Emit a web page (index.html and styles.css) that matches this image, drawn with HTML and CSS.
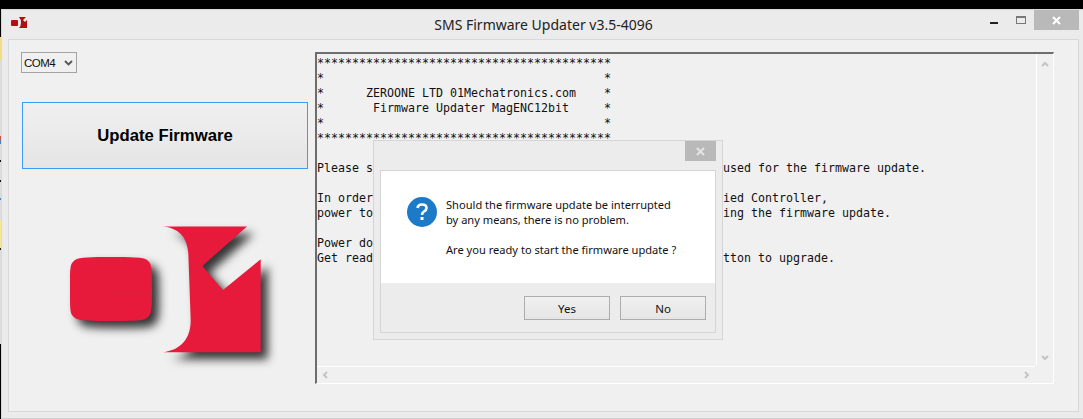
FILE: index.html
```html
<!DOCTYPE html>
<html lang="en">
<head>
  <meta charset="UTF-8">
  <title>SMS Firmware Updater</title>
  <link rel="stylesheet" href="styles.css">
</head>
<body>

  <div class="fenster">

    <div class="titelleiste">
      <svg class="app-icon" width="18" height="12" viewBox="0 0 18 12">
        <rect x="0" y="3" width="7" height="6" rx="1" fill="#b50d12"/>
        <path d="M8 0H15L12 3L14 5L16 3V11H8Q10 9 10 6Q10 2 8 0Z" fill="#b50d12"/>
      </svg>
      <div class="titel">SMS Firmware Updater v3.5-4096</div>
      <div class="fenster-knoepfe">
        <span class="knopf-min"></span>
        <span class="knopf-max"></span>
        <span class="knopf-close">
          <svg width="9" height="9" viewBox="0 0 9 9"><path d="M1 1L8 8M8 1L1 8" stroke="#fff" stroke-width="2"/></svg>
        </span>
      </div>
    </div>

    <div class="inhalt">

      <div class="links">
        <div class="com-select">
          <span>COM4</span>
          <svg width="9" height="6" viewBox="0 0 9 6"><path d="M1 1L4.5 4.5L8 1" fill="none" stroke="#555" stroke-width="1.8"/></svg>
        </div>
        <button class="update-btn">Update Firmware</button>
        <svg class="logo" width="200" height="140" viewBox="0 0 200 140">
          <path d="M10 63C10 40 10 38 15 34C19 31 32 31 51 31C70 31 84 31 87 34C92 38 92 42 92 63C92 84 92 88 87 92C84 95 70 95 51 95C32 95 19 95 15 92C10 88 10 86 10 63Z" fill="#e71a3b"/>
          <path d="M52 67H91" stroke="#d2243c" stroke-width="1"/>
          <path d="M102.700 0.500H187L142.300 40L163 64L200.700 33.300V126.300H102.700C116.700 124.500 130.700 117 130.700 94L128.300 27.300C127 10 118 2 102.700 0.500Z" fill="#e71a3b"/>
        </svg>
      </div>

      <div class="log-box">
        <pre class="log-text">******************************************
*                                        *
*      ZEROONE LTD 01Mechatronics.com    *
*       Firmware Updater MagENC12bit     *
*                                        *
******************************************

Please s                                                  used for the firmware update.

In order                                                 fied Controller,
power to                                                  ing the firmware update.

Power do
Get read                                                  tton to upgrade.</pre>
        <div class="scroll-v">
          <svg width="8" height="6" viewBox="0 0 8 6"><path d="M1 5L4 2L7 5" fill="none" stroke="#c4c4c4" stroke-width="2"/></svg>
          <svg width="8" height="6" viewBox="0 0 8 6"><path d="M1 1L4 4L7 1" fill="none" stroke="#c4c4c4" stroke-width="2"/></svg>
        </div>
        <div class="scroll-h">
          <svg width="6" height="8" viewBox="0 0 6 8"><path d="M5 1L2 4L5 7" fill="none" stroke="#c4c4c4" stroke-width="2"/></svg>
          <svg width="6" height="8" viewBox="0 0 6 8"><path d="M1 1L4 4L1 7" fill="none" stroke="#c4c4c4" stroke-width="2"/></svg>
        </div>
      </div>

    </div>
  </div>

  <!-- Dialog -->
  <div class="dialog">
    <div class="dialog-kopf">
      <span class="dialog-close">
        <svg width="9" height="9" viewBox="0 0 9 9"><path d="M1 1L8 8M8 1L1 8" stroke="#e4e4e4" stroke-width="2"/></svg>
      </span>
    </div>
    <div class="dialog-rahmen">
      <div class="dialog-text">
        <svg class="frage-icon" width="30" height="30" viewBox="0 0 30 30">
          <circle cx="15" cy="15" r="15" fill="#1b7bc9"/>
          <path d="M10.500 11Q11 7.500 15 7.500Q19.500 7.500 19.500 11Q19.500 13 17 14.500Q15 15.700 15 18" fill="none" stroke="#fff" stroke-width="2.600"/>
          <rect x="13.500" y="20" width="3" height="3" fill="#fff"/>
        </svg>
        <p>Should the firmware update be interrupted<br>by any means, there is no problem.<br><br>Are you ready to start the firmware update ?</p>
      </div>
      <div class="dialog-fuss">
        <button class="dialog-btn">Yes</button>
        <button class="dialog-btn">No</button>
      </div>
    </div>
  </div>

</body>
</html>
```
FILE: styles.css
```css
html, body {
  margin: 0;
  height: 419px;
  overflow: hidden;
}

/* schmaler Streifen links: Desktop hinter dem Fenster */
body {
  background: linear-gradient(#000 37px, #f5dc80 37px, #f5dc80 60px, #ddd 60px, #ddd 136px, #e8502a 136px, #2a8ae8 144px, #ddd 144px, #ddd 160px, #111 160px, #111 162px, #ddd 162px, #ddd 180px, #111 180px, #111 182px, #ddd 182px, #ddd 198px, #3a8ae0 198px, #3a8ae0 200px, #ddd 200px, #ddd 220px, #f8e890 220px, #f8e890 240px, #ddd 240px, #f8e890 242px, #f8e890 248px, #222 248px, #222 250px, #ddd 250px, #ddd 344px, #000 344px) 0 0 / 1px 100% no-repeat, #000;
  padding-top: 9px;
  box-sizing: border-box;
}

.fenster {
  margin-left: 1px;
  height: 410px;
  box-sizing: border-box;
  background: #ebebeb;
  border-top: 1px solid #d8d8d8;
  border-left: 1px solid #d8d8d8;
  border-bottom: 1px solid #d0d0d0;
  padding: 0 4px 6px 6px;
  display: flex;
  flex-direction: column;
}

.titelleiste {
  height: 29px;
  position: relative;
  display: flex;
  align-items: center;
  justify-content: center;
  flex: none;
}

.app-icon {
  position: absolute;
  left: 3px;
  top: 7px;
}

.titel {
  font-family: "Noto Sans", sans-serif;
  font-size: 14px;
  color: #222;
}

.fenster-knoepfe {
  position: absolute;
  right: -4px;
  top: 0;
  display: flex;
  align-items: flex-start;
}

.knopf-min {
  width: 8px;
  height: 2px;
  background: #222;
  margin: 12px 18px 0 0;
}

.knopf-max {
  width: 8px;
  height: 5px;
  border: 1px solid #777;
  border-top-width: 2px;
  margin: 6px 8px 0 0;
}

.knopf-close {
  width: 45px;
  height: 20px;
  margin-right: 4px;
  background: #b9b9b9;
  display: flex;
  align-items: center;
  justify-content: center;
}

.inhalt {
  flex: 1;
  background: #f0f0f0;
  border: 1px solid #d8d8d8;
  display: flex;
  gap: 6px;
  padding: 12px 24px 26px 13px;
}

.links {
  width: 287px;
  flex: none;
  display: flex;
  flex-direction: column;
}

.com-select {
  width: 52px;
  height: 19px;
  border: 1px solid #a3a3a3;
  margin-left: -1px;
  display: flex;
  align-items: center;
  justify-content: space-between;
  padding: 0 0 0 2px;
  font-family: "Liberation Sans", sans-serif;
  font-size: 11.5px;
  letter-spacing: -0.5px;
  color: #111;
}

.com-select svg {
  margin-right: 3px;
}

.update-btn {
  width: 286px;
  height: 67px;
  margin-top: 29px;
  background: linear-gradient(#f0f0f0, #e5e5e5);
  border: 1px solid #3a9cf5;
  font-family: "Liberation Sans", sans-serif;
  font-weight: bold;
  font-size: 16.7px;
  color: #000;
  padding: 0;
}

.logo {
  margin: 57px 0 0 38px;
  overflow: visible;
  filter: drop-shadow(7px 7px 5px rgba(20, 20, 20, 0.85));
}

.log-box {
  flex: 1;
  position: relative;
  box-sizing: border-box;
  height: 332px;
  border-top: 2px solid #6d6d6d;
  border-left: 2px solid #6d6d6d;
  border-right: 1px solid #fff;
  border-bottom: 1px solid #fff;
  background: #f0f0f0;
  overflow: hidden;
}

.log-text {
  margin: 0;
  padding: 2px 0 0 0;
  font-family: "DejaVu Sans Mono", monospace;
  font-size: 11.63px;
  line-height: 15px;
  color: #111;
}

.scroll-v {
  position: absolute;
  right: 0;
  top: 0;
  bottom: 18px;
  width: 17px;
  border-left: 1px solid #fff;
  display: flex;
  flex-direction: column;
  justify-content: space-between;
  align-items: center;
  padding: 7px 1px 4px 0;
  box-sizing: border-box;
  background: #f0f0f0;
}

.scroll-h {
  position: absolute;
  left: 0;
  right: 18px;
  bottom: 0;
  height: 17px;
  border-top: 1px solid #fff;
  display: flex;
  justify-content: space-between;
  align-items: center;
  padding: 0 5px;
  box-sizing: border-box;
  background: #f0f0f0;
}

.dialog {
  position: absolute;
  left: 373px;
  top: 140px;
  width: 350px;
  height: 200px;
  box-sizing: border-box;
  background: #ececec;
  border: 1px solid #d5d5d5;
  padding: 0 6px 6px 6px;
  display: flex;
  flex-direction: column;
}

.dialog-kopf {
  height: 29px;
  flex: none;
  display: flex;
  justify-content: flex-end;
  align-items: flex-start;
}

.dialog-close {
  width: 31px;
  height: 20px;
  background: #b9b9b9;
  display: flex;
  align-items: center;
  justify-content: center;
}

.dialog-rahmen {
  flex: 1;
  border: 1px solid #d5d5d5;
  display: flex;
  flex-direction: column;
}

.dialog-text {
  background: #fff;
  height: 112px;
  flex: none;
  display: flex;
  align-items: flex-start;
  gap: 9px;
  padding: 26px 0 0 26px;
  box-sizing: border-box;
}

.frage-icon {
  flex: none;
}

.dialog-text p {
  margin: 0;
  font-family: "Noto Sans", sans-serif;
  font-size: 11.1px;
  line-height: 15px;
  color: #111;
  white-space: nowrap;
}

.dialog-fuss {
  flex: 1;
  display: flex;
  justify-content: flex-end;
  gap: 10px;
  padding: 13px 9px 0 0;
}

.dialog-btn {
  width: 86px;
  height: 24px;
  background: linear-gradient(#f0f0f0, #e5e5e5);
  border: 1px solid #adadad;
  font-family: "Noto Sans", sans-serif;
  font-size: 11.5px;
  color: #111;
  padding: 0;
}
```
